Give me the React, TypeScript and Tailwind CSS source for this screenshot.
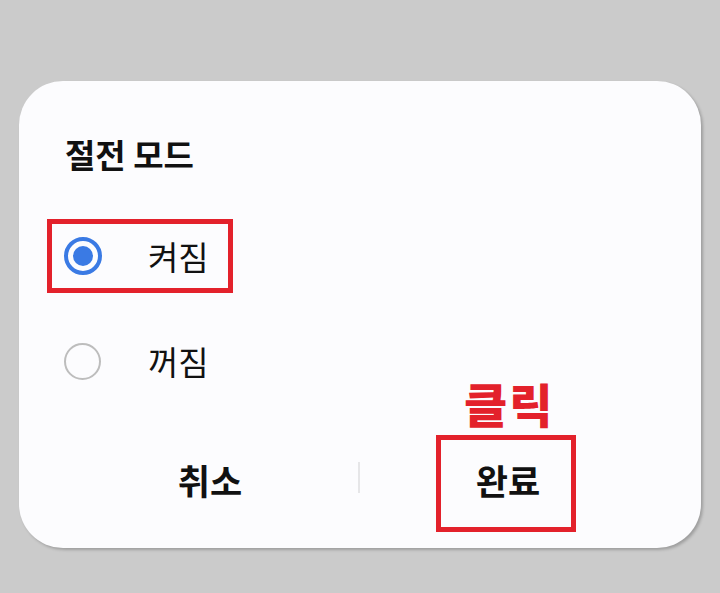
import React from "react";

const font = { fontFamily: '"Noto Sans CJK KR", "Noto Sans", sans-serif' };

function Radio({ checked }: { checked: boolean }) {
  return checked ? (
    <div className="w-[38px] h-[38px] rounded-full border-[4px] border-[#3a7ae4] flex items-center justify-center shrink-0">
      <div className="w-[20px] h-[20px] rounded-full bg-[#3a7ae4]" />
    </div>
  ) : (
    <div className="w-[37px] h-[37px] rounded-full border-[2.5px] border-[#bdbdbd] shrink-0" />
  );
}

export default function App() {
  return (
    <div className="w-[720px] h-[593px] bg-[#cbcbcb] overflow-hidden pt-[81px] pl-[19px]" style={font}>
      <div className="w-[682px] h-[467px] rounded-[44px] bg-[#fcfcfe] shadow-[2px_2px_3px_rgba(0,0,0,0.22)] flex flex-col">
        <div className="pt-[57px] pl-[46px] text-[33px] leading-[33px] font-bold text-[#111]">
          절전 모드
        </div>

        <div className="mt-[48px] ml-[28px] w-[186px] h-[74px] border-[5px] border-[#e3212b] flex items-center pl-[12px]">
          <Radio checked />
          <span className="ml-[46px] text-[33px] leading-[33px] text-[#111]">켜짐</span>
        </div>

        <div className="mt-[31px] ml-[28px] w-[186px] h-[74px] border-[5px] border-transparent flex items-center pl-[12px]">
          <Radio checked={false} />
          <span className="ml-[47px] text-[33px] leading-[33px] text-[#111]">꺼짐</span>
        </div>

        <div className="mt-[42px] h-[80px] pl-[43px] pr-[45px] flex items-center">
          <div className="flex-1 flex justify-center items-center text-[35px] leading-[34px] font-bold text-[#111]">
            취소
          </div>
          <div className="w-[2px] h-[31px] bg-[#e6e6e8] -mt-[5px]" />
          <div className="flex-1 relative flex justify-center items-center text-[35px] leading-[34px] font-bold text-[#111]">
            완료
            <div className="absolute left-[76px] top-[-28px] w-[140px] h-[97px] border-[5px] border-[#e3212b]" />
            <div className="absolute left-[104px] top-[-84px] text-[47px] leading-[47px] font-black text-[#e3212b] tracking-[2px]">
              클릭
            </div>
          </div>
        </div>
      </div>
    </div>
  );
}
